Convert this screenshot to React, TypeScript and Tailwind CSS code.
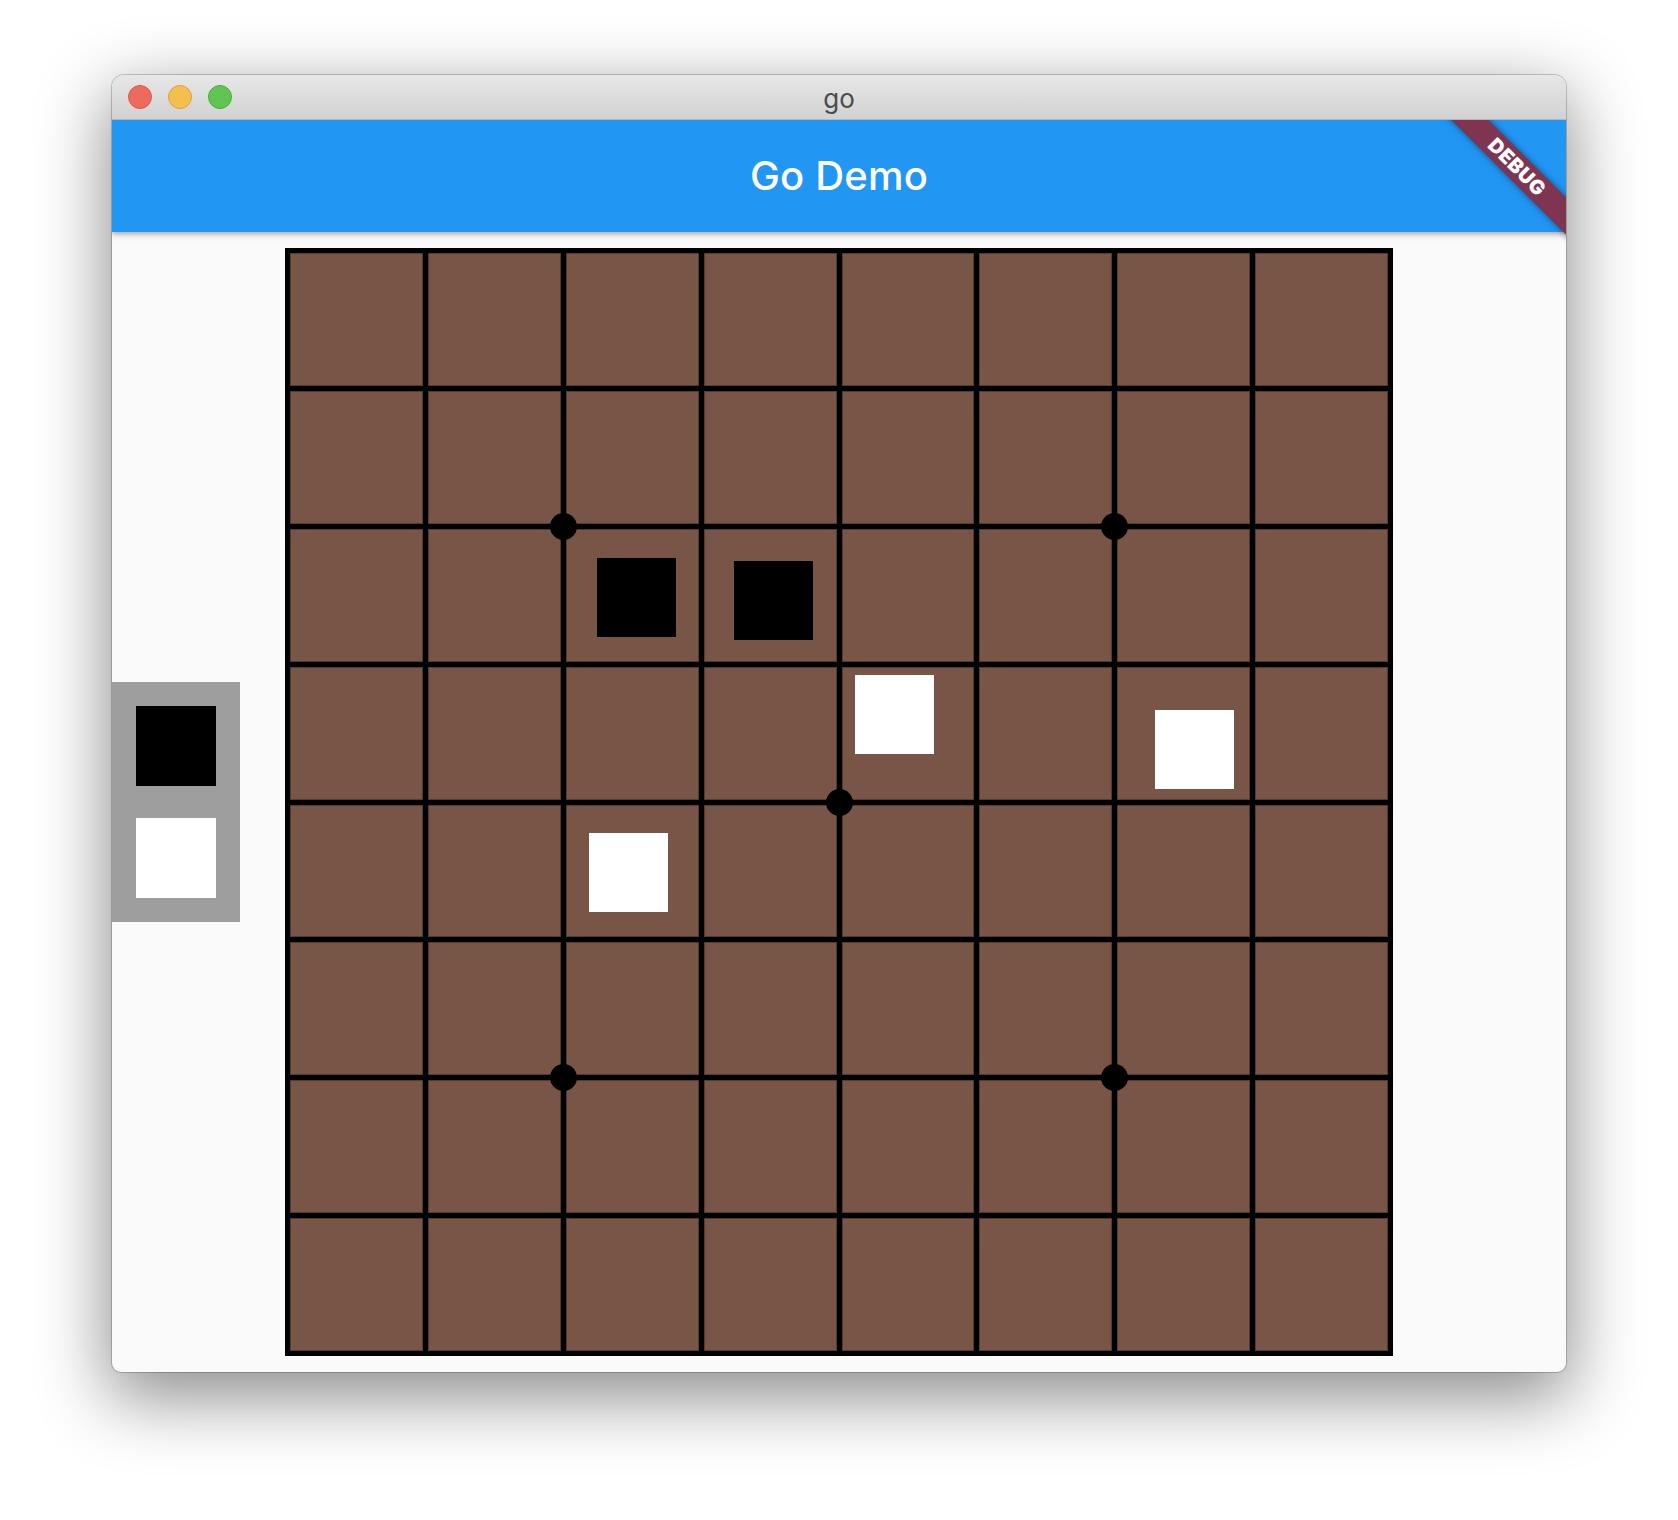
import React from "react";

const HOSHI = [
  [2, 2],
  [6, 2],
  [4, 4],
  [2, 6],
  [6, 6],
];

// stone positions measured on the board (px from board top-left)
const STONES = [
  { x: 312, y: 310, black: true },
  { x: 449, y: 313, black: true },
  { x: 570, y: 427, black: false },
  { x: 870, y: 462, black: false },
  { x: 304, y: 585, black: false },
];

const PITCH = 137.875;

const TrafficLights = () => (
  <div className="flex items-center gap-4 pl-4">
    <span className="w-6 h-6 rounded-full bg-[#ee6a5f] border border-[#d65a4f]" />
    <span className="w-6 h-6 rounded-full bg-[#f5bf4f] border border-[#d9a23e]" />
    <span className="w-6 h-6 rounded-full bg-[#61c554] border border-[#4ea73f]" />
  </div>
);

const Board = () => (
  <div className="relative w-[1108px] h-[1108px] bg-black p-[5px] grid grid-cols-8 grid-rows-8 gap-[5px]">
    {Array.from({ length: 64 }).map((_, i) => (
      <div
        key={i}
        className="bg-[#795548] shadow-[inset_0_0_0_1px_rgba(0,0,0,0.3)]"
      />
    ))}

    {HOSHI.map(([c, r], i) => (
      <span
        key={i}
        className="absolute w-[27px] h-[27px] rounded-full bg-black"
        style={{ left: 2.5 + c * PITCH - 13.5, top: 2.5 + r * PITCH - 13.5 }}
      />
    ))}

    {STONES.map((s, i) => (
      <span
        key={i}
        className={`absolute w-[79px] h-[79px] ${
          s.black ? "bg-black" : "bg-white"
        }`}
        style={{ left: s.x, top: s.y }}
      />
    ))}
  </div>
);

export default function App() {
  return (
    <div className="min-h-[1520px] bg-white pt-[75px] font-['Inter','Liberation_Sans',sans-serif]">
      <div className="mx-auto w-[1454px] rounded-t-[12px] rounded-b-[9px] overflow-hidden bg-[#fafafa] ring-1 ring-black/20 shadow-[0_22px_70px_4px_rgba(0,0,0,0.45)]">
        {/* title bar */}
        <div className="h-[45px] grid grid-cols-[1fr_auto_1fr] items-center bg-gradient-to-b from-[#e8e7e8] to-[#d3d2d3] border-b border-[#b6b6b6]">
          <TrafficLights />
          <span className="text-[26px] leading-none text-[#4c4c4c] mt-[3px]">go</span>
          <span />
        </div>

        <div className="relative overflow-hidden">
          {/* app bar */}
          <div className="relative z-10 h-[112px] bg-[#2196f3] flex items-center justify-center shadow-[0_2px_4px_rgba(0,0,0,0.2),0_4px_6px_rgba(0,0,0,0.12)]">
            <h1 className="text-[40px] font-medium text-white tracking-[0.2px]">Go Demo</h1>
          </div>

          {/* content */}
          <div className="h-[1140px] grid grid-cols-[1fr_auto_1fr] items-center">
            <div className="justify-self-start w-[128px] bg-[#9e9e9e] p-6 flex flex-col gap-8">
              <div className="w-20 h-20 bg-black" />
              <div className="w-20 h-20 bg-white" />
            </div>
            <Board />
            <div />
          </div>

          {/* debug banner */}
          <div className="absolute z-20 left-[1305px] top-[34px] w-[200px] h-[26px] rotate-45 bg-[#7f3552] shadow-[0_0_6px_rgba(0,0,0,0.5)] flex items-center justify-center">
            <span className="text-[20px] font-black text-white leading-none tracking-[0.5px]">DEBUG</span>
          </div>
        </div>
      </div>
    </div>
  );
}
